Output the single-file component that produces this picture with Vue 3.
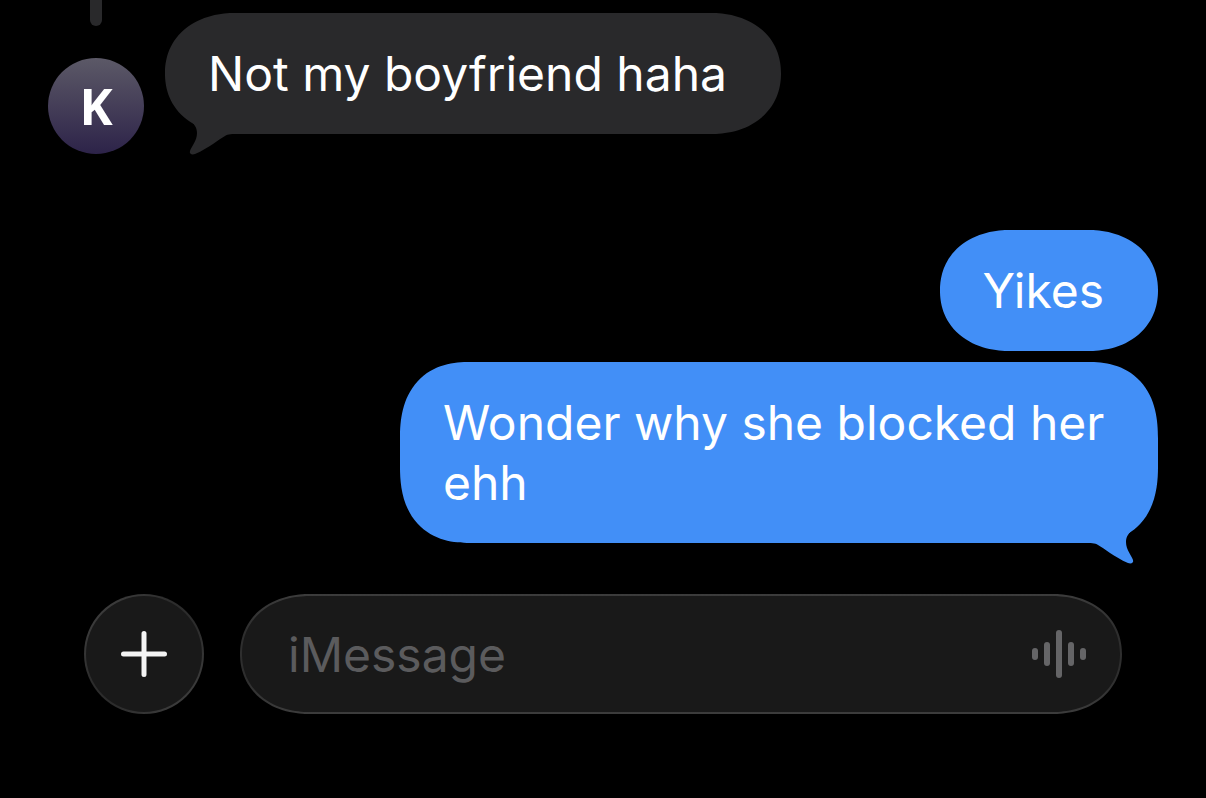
<script setup>
import { ref } from 'vue'

const draft = ref('')
const received = { initial: 'K', text: 'Not my boyfriend haha' }
const sent = [
  { id: 1, text: 'Yikes', tail: false },
  { id: 2, text: 'Wonder why she blocked her ehh', tail: true },
]
</script>

<template>
  <main class="chat">
    <section class="thread" aria-label="Conversation">
      <div class="row">
        <div class="sender">
          <span class="thread-line"></span>
          <span class="avatar">{{ received.initial }}</span>
        </div>
        <p class="bubble incoming">
          {{ received.text }}
          <svg class="tail" width="70" height="42" viewBox="0 0 70 42" aria-hidden="true">
            <path d="M4 0C9 5 12 8 12 14C12 22 6 28 5 32C4 35 7 36 10 35C24 29 34 20 40 17C43 15 47 15 54 15V0Z" />
          </svg>
        </p>
      </div>
      <div class="sent">
        <p
          v-for="message in sent"
          :key="message.id"
          class="bubble outgoing"
          :class="{ long: message.tail }"
        >
          {{ message.text }}
          <svg v-if="message.tail" class="tail" width="70" height="42" viewBox="0 0 70 42" aria-hidden="true">
            <path d="M4 0C9 5 12 8 12 14C12 22 6 28 5 32C4 35 7 36 10 35C24 29 34 20 40 17C43 15 47 15 54 15V0Z" />
          </svg>
        </p>
      </div>
    </section>

    <form class="composer" @submit.prevent>
      <button class="add" type="button" aria-label="Add attachment">
        <svg width="48" height="48" viewBox="0 0 48 48" aria-hidden="true">
          <path d="M24 3.500V44.500M3.500 24H44.500" />
        </svg>
      </button>
      <div class="field">
        <input v-model="draft" type="text" placeholder="iMessage" aria-label="iMessage" />
        <button class="dictate" type="button" aria-label="Record audio">
          <svg width="54" height="48" viewBox="0 0 54 48" aria-hidden="true">
            <rect x="0" y="18" width="6" height="12" rx="3" />
            <rect x="12" y="12" width="6" height="24" rx="3" />
            <rect x="24" y="0" width="6" height="48" rx="3" />
            <rect x="36" y="12" width="6" height="24" rx="3" />
            <rect x="48" y="18" width="6" height="12" rx="3" />
          </svg>
        </button>
      </div>
    </form>
  </main>
</template>

<style>
body {
  margin: 0;
  background: #000;
}
</style>

<style scoped>
.chat {
  box-sizing: border-box;
  min-height: 100vh;
  background: #000;
  color: #fff;
  font-family: Inter, "Liberation Sans", sans-serif;
  font-size: 48px;
  line-height: 60px;
}

.thread {
  padding: 0 48px;
}

.row {
  display: flex;
  gap: 21px;
}

.sender {
  display: flex;
  flex-direction: column;
  align-items: center;
  gap: 32px;
}

.thread-line {
  width: 12px;
  height: 26px;
  border-radius: 0 0 6px 6px;
  background: #29292b;
}

.avatar {
  width: 96px;
  height: 96px;
  border-radius: 50%;
  background: linear-gradient(#5c5967, #2d2349);
  font-family: "Noto Sans", sans-serif;
  font-size: 50px;
  font-weight: 700;
  line-height: 96px;
  text-align: center;
}

.bubble {
  position: relative;
  margin: 0;
  padding: 31px 54px 30px 43px;
}

.bubble,
.field {
  border-radius: 64px / 60px;
}

.incoming {
  align-self: flex-start;
  margin-top: 13px;
  background: #29292b;
}

.tail {
  position: absolute;
  top: 100%;
  left: 20px;
  margin-top: -15px;
  fill: #29292b;
}

.sent {
  display: flex;
  flex-direction: column;
  align-items: flex-end;
  gap: 11px;
  margin-top: 76px;
}

.outgoing {
  max-width: 664px;
  background: #428ff7;
}

.long {
  padding-right: 51px;
  border-radius: 60px / 68px;
}

@supports (corner-shape: superellipse(1.1)) {
  .bubble,
  .field {
    border-radius: 70px / 60px;
    corner-shape: superellipse(1.1);
  }

  .long {
    border-radius: 70px / 76px;
    corner-shape: superellipse(1.25);
  }
}

.outgoing .tail {
  right: 20px;
  left: auto;
  fill: #428ff7;
  transform: scaleX(-1);
}

.composer {
  display: flex;
  gap: 36px;
  padding: 51px 84px 0;
}

.add,
.field {
  box-sizing: border-box;
  height: 120px;
  border: 2px solid transparent;
  background:
    linear-gradient(#191919, #191919) padding-box,
    linear-gradient(135deg, #444, #2c2c2c 40%, #2c2c2c 60%, #444) border-box;
}

.add {
  display: grid;
  flex: 0 0 120px;
  place-items: center;
  padding: 0;
  border-radius: 50%;
}

.add path {
  fill: none;
  stroke: #f4f4f4;
  stroke-width: 5;
  stroke-linecap: round;
}

.field {
  display: flex;
  flex: 1;
  align-items: center;
  min-width: 0;
  padding: 0 34px 0 46px;
  background:
    linear-gradient(#191919, #191919) padding-box,
    linear-gradient(#3c3c3c, #2e2e2e 30%, #2e2e2e 70%, #3c3c3c) border-box;
}

input {
  flex: 1;
  min-width: 0;
  padding: 2px 0 0;
  border: 0;
  outline: 0;
  background: transparent;
  color: #fff;
  font: inherit;
}

input::placeholder {
  color: #5b5b5d;
  opacity: 1;
}

.dictate {
  display: flex;
  padding: 0;
  border: 0;
  background: transparent;
  fill: #656567;
}
</style>
